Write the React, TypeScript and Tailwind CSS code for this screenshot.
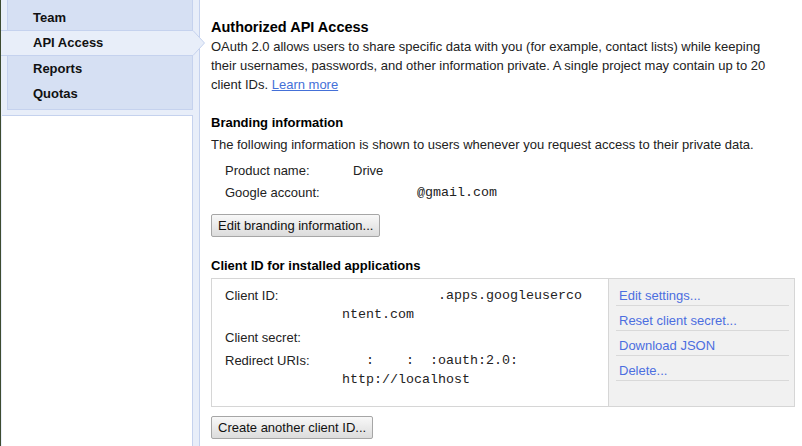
import React from "react";

const navItems = ["Team", "API Access", "Reports", "Quotas"];
const activeItem = "API Access";

const clientLinks = [
  "Edit settings...",
  "Reset client secret...",
  "Download JSON",
  "Delete...",
];

const GrayButton: React.FC<{ children: React.ReactNode; className?: string }> = ({
  children,
  className = "",
}) => (
  <button
    className={`block h-[23px] rounded-[2px] border border-[#a6a6a6] bg-gradient-to-b from-[#f8f8f8] to-[#dcdcdc] px-[6px] text-[13px] leading-[21px] text-[#111] ${className}`}
  >
    {children}
  </button>
);

export default function App() {
  return (
    <div className="flex h-[446px] w-[802px] overflow-hidden bg-white font-['Liberation_Sans',Arial,sans-serif] text-[13px] leading-[19px] text-[#222]">
      {/* Sidebar */}
      <aside className="flex w-[200px] shrink-0 flex-col border-l border-r border-l-[#3d4b30] border-r-[#c5d2ee] bg-[#e8eef9] px-[6px]">
        <nav className="relative z-10 border-x border-b border-[#c5d2ee] bg-[#d6e0f3] pt-[5px] pb-[3px]">
          {navItems.map((item) =>
            item === activeItem ? (
              <div
                key={item}
                className="relative -ml-[7px] -mr-[1px] h-[26px] border-y border-[#c5d2ee] bg-[#e8eef9] pl-[32px] text-[13px] font-bold leading-[24px] text-[#111]"
              >
                {item}
                <svg
                  className="absolute left-full top-[-1px]"
                  width="12"
                  height="26"
                  viewBox="0 0 12 26"
                >
                  <polygon points="0,0 11.5,13 0,26" fill="#e8eef9" />
                  <polyline
                    points="0,0.5 11.5,13 0,25.5"
                    fill="none"
                    stroke="#c5d2ee"
                    strokeWidth="1"
                  />
                </svg>
              </div>
            ) : (
              <div
                key={item}
                className="h-[25px] pl-[25px] text-[13px] font-bold leading-[25px] text-[#111]"
              >
                {item}
              </div>
            ),
          )}
        </nav>
        <div className="-ml-[5px] mt-[5px] flex-1 border-t border-r border-[#c5d2ee] bg-white" />
      </aside>

      {/* Main */}
      <main className="flex-1 pl-[11px] pt-[18px]">
        <h1 className="mb-[1px] text-[14.5px] font-bold leading-[18px] text-black">
          Authorized API Access
        </h1>
        <div className="w-[575px]">
          <span>
            OAuth 2.0 allows users to share specific data with you (for example,
            contact lists) while keeping their usernames, passwords, and other
            information private. A single project may contain up to 20 client
            IDs.
          </span>{" "}
          <a href="#" className="text-[#4470d8] underline">
            Learn more
          </a>
        </div>

        <h2 className="mt-[19px] font-bold text-black">Branding information</h2>
        <p className="mt-[3px]">
          The following information is shown to users whenever you request
          access to their private data.
        </p>

        <table className="ml-[14px] mt-[6px] leading-[22px]">
          <tbody>
            <tr>
              <td className="w-[128px] p-0">Product name:</td>
              <td className="p-0">Drive</td>
            </tr>
            <tr>
              <td className="p-0">Google account:</td>
              <td className="whitespace-pre p-0 font-['Liberation_Mono','Courier_New',monospace] text-[13.33px]">
                {"        @gmail.com"}
              </td>
            </tr>
          </tbody>
        </table>

        <GrayButton className="mt-[10px]">Edit branding information...</GrayButton>

        <h2 className="mt-[19px] font-bold text-black">
          Client ID for installed applications
        </h2>

        <div className="mt-[3px] flex h-[129px] w-[584px] border border-[#d6d6d6]">
          <div className="flex-1 pl-[13px] pt-[5px]">
            <table>
              <tbody>
                <tr>
                  <td className="w-[117px] p-0 py-[2px] align-top">Client ID:</td>
                  <td className="whitespace-pre p-0 py-[2px] align-top font-['Liberation_Mono','Courier_New',monospace] text-[13.33px]">
                    {"            .apps.googleuserco"}
                    <br />
                    {"ntent.com"}
                  </td>
                </tr>
                <tr>
                  <td className="p-0 py-[2px] align-top">Client secret:</td>
                  <td className="p-0 py-[2px]">&nbsp;</td>
                </tr>
                <tr>
                  <td className="p-0 py-[2px] align-top">Redirect URIs:</td>
                  <td className="whitespace-pre p-0 py-[2px] align-top font-['Liberation_Mono','Courier_New',monospace] text-[13.33px]">
                    {"   :    :  :oauth:2.0:"}
                    <br />
                    {"http://localhost"}
                  </td>
                </tr>
              </tbody>
            </table>
          </div>
          <div className="w-[186px] border-l border-[#d6d6d6] bg-[#f1f1f1] pl-[7px] pr-[5px] pt-[2px]">
            {clientLinks.map((link) => (
              <a
                key={link}
                href="#"
                className="block h-[25px] border-b border-[#d9d9d9] pl-[3px] pt-[5px] leading-[19px] text-[#4c6ee0]"
              >
                {link}
              </a>
            ))}
          </div>
        </div>

        <GrayButton className="mt-[9px]">Create another client ID...</GrayButton>
      </main>
    </div>
  );
}
